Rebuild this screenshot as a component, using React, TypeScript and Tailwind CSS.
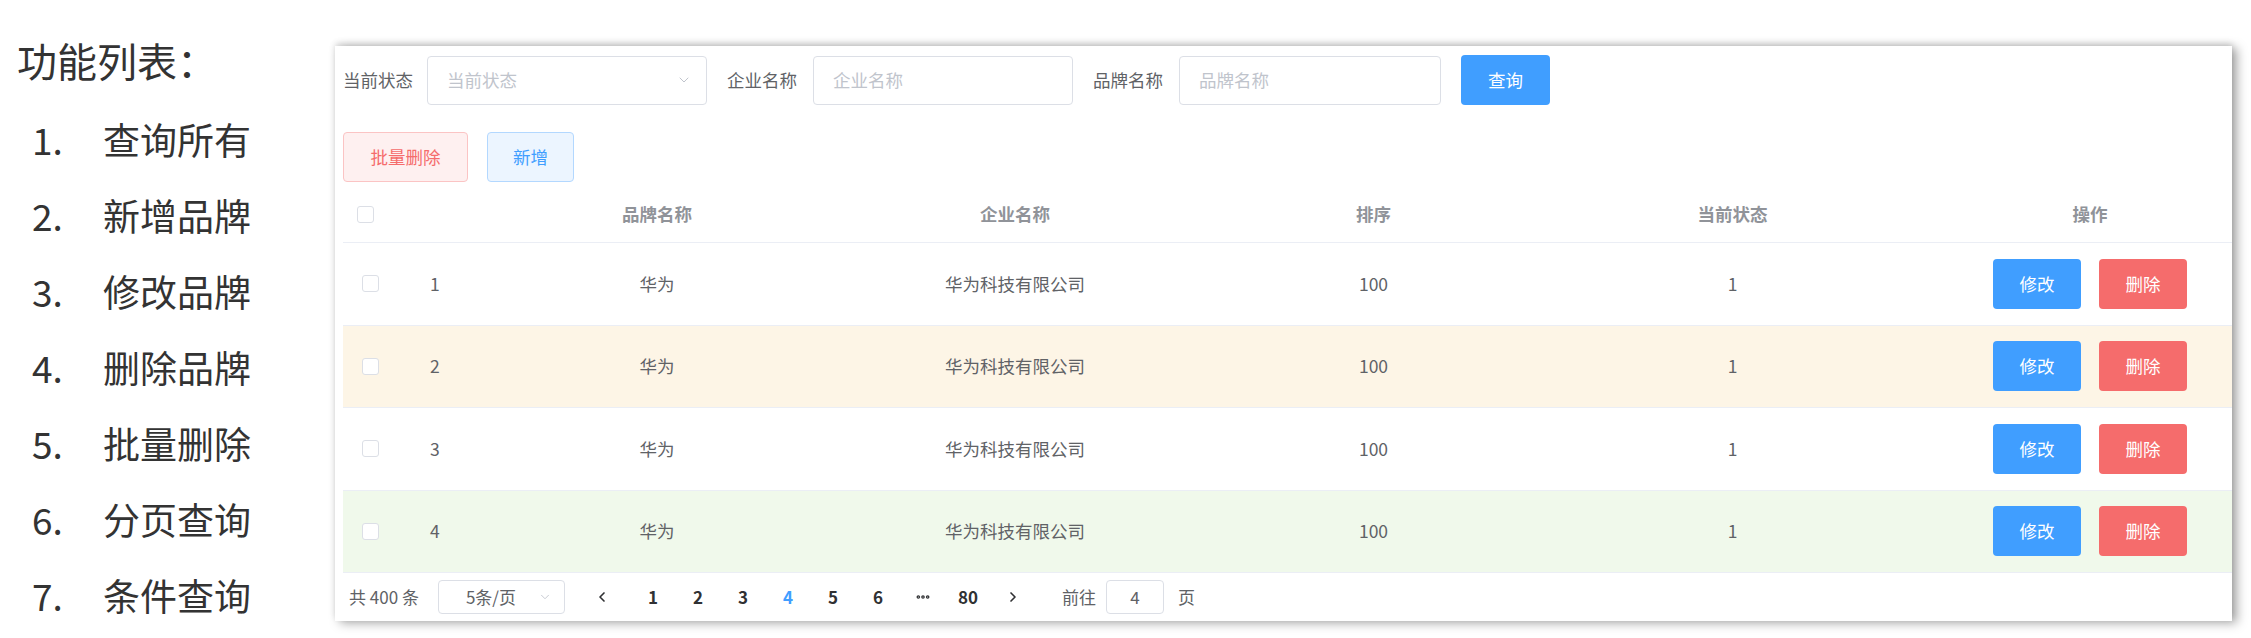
import { ChevronDown, ChevronLeft, ChevronRight, MoreHorizontal } from "lucide-react";

const features = [
  "查询所有",
  "新增品牌",
  "修改品牌",
  "删除品牌",
  "批量删除",
  "分页查询",
  "条件查询",
];

const rows = [
  { id: 1, bg: "bg-white" },
  { id: 2, bg: "bg-[#fdf5e6]" },
  { id: 3, bg: "bg-white" },
  { id: 4, bg: "bg-[#f0f9eb]" },
];

const pages = ["1", "2", "3", "4", "5", "6", "more", "80"];

const gridCols = "grid grid-cols-[72px_63px_358px_358px_359px_359px_356px]";

const Checkbox = () => (
  <span className="block w-[17px] h-[17px] rounded-[3px] border border-[#dcdfe6] bg-white" />
);

const App = () => {
  return (
    <div
      className="w-[2251px] h-[638px] bg-white flex"
      style={{ fontFamily: '"Noto Sans CJK SC", "Noto Sans", sans-serif' }}
    >
      {/* left: feature list */}
      <div className="w-[335px] shrink-0 pl-[17px] pt-[22px] text-[#333333]">
        <div className="h-[76px] flex items-center text-[40px] leading-none">功能列表：</div>
        <ol className="mt-[3px]">
          {features.map((f, i) => (
            <li key={f} className="h-[76px] flex items-center text-[37px] leading-none">
              <span className="w-[86px] pl-[15px]">{i + 1}.</span>
              <span>{f}</span>
            </li>
          ))}
        </ol>
      </div>

      {/* right: brand table panel */}
      <div className="mt-[46px] w-[1897px] h-[575px] bg-white overflow-hidden shadow-[5px_2px_10px_rgba(0,0,0,0.35),0_-3px_6px_rgba(0,0,0,0.12)] text-[17.5px] text-[#606266]">
        {/* search form */}
        <div className="flex items-center pl-[8px] pt-[9px] h-[59px]">
          <span className="w-[70px]">当前状态</span>
          <div className="ml-[14px] w-[280px] h-[49px] rounded-[4px] border border-[#dcdfe6] flex items-center justify-between pl-[19px] pr-[14px] text-[#c0c4cc]">
            <span>当前状态</span>
            <ChevronDown size={16} strokeWidth={1.5} className="text-[#c0c4cc]" />
          </div>
          <span className="ml-[20px] w-[72px]">企业名称</span>
          <div className="ml-[14px] w-[260px] h-[49px] rounded-[4px] border border-[#dcdfe6] flex items-center pl-[19px] text-[#c0c4cc]">
            企业名称
          </div>
          <span className="ml-[20px] w-[72px]">品牌名称</span>
          <div className="ml-[14px] w-[262px] h-[49px] rounded-[4px] border border-[#dcdfe6] flex items-center pl-[19px] text-[#c0c4cc]">
            品牌名称
          </div>
          <button className="ml-[20px] w-[89px] h-[50px] rounded-[4px] bg-[#409eff] text-white">查询</button>
        </div>

        {/* actions */}
        <div className="flex gap-[19px] pl-[8px] mt-[27px]">
          <button className="w-[125px] h-[50px] rounded-[4px] border border-[#fbc4c4] bg-[#fef0f0] text-[#f56c6c]">
            批量删除
          </button>
          <button className="w-[87px] h-[50px] rounded-[4px] border border-[#b3d8ff] bg-[#ecf5ff] text-[#409eff]">
            新增
          </button>
        </div>

        {/* table */}
        <div className="ml-[8px] mt-[4px]">
          <div className={`${gridCols} h-[57px] items-center border-b border-[#ebeef5] font-semibold text-[#909399]`}>
            <div className="pl-[14px]">
              <Checkbox />
            </div>
            <div />
            <div className="text-center">品牌名称</div>
            <div className="text-center">企业名称</div>
            <div className="text-center">排序</div>
            <div className="text-center">当前状态</div>
            <div className="text-center">操作</div>
          </div>
          {rows.map((r) => (
            <div
              key={r.id}
              className={`${gridCols} h-[82.5px] items-center border-b border-[#ebeef5] ${r.bg}`}
            >
              <div className="pl-[19px]">
                <Checkbox />
              </div>
              <div className="pl-[15px]">{r.id}</div>
              <div className="text-center">华为</div>
              <div className="text-center">华为科技有限公司</div>
              <div className="text-center">100</div>
              <div className="text-center">1</div>
              <div className="flex justify-center gap-[18px]">
                <button className="w-[88px] h-[50px] rounded-[4px] bg-[#409eff] text-white">修改</button>
                <button className="w-[88px] h-[50px] rounded-[4px] bg-[#f56c6c] text-white">删除</button>
              </div>
            </div>
          ))}
        </div>

        {/* pagination */}
        <div className="flex items-center h-[47px] pl-[14px] text-[17px]">
          <span>共 400 条</span>
          <div className="ml-[19px] w-[127px] h-[34px] rounded-[4px] border border-[#dcdfe6] flex items-center justify-between pl-[27px] pr-[12px]">
            <span>5条/页</span>
            <ChevronDown size={14} strokeWidth={1.5} className="text-[#c0c4cc]" />
          </div>
          <div className="ml-[14px] flex items-center font-bold text-[#303133]">
            <span className="w-[45.5px] mr-[6px] flex justify-center">
              <ChevronLeft size={16} strokeWidth={2.5} />
            </span>
            {pages.map((p) =>
              p === "more" ? (
                <span key={p} className="w-[45px] flex justify-center">
                  <MoreHorizontal size={16} strokeWidth={3.5} />
                </span>
              ) : (
                <span
                  key={p}
                  className={`w-[45px] text-center ${p === "4" ? "text-[#409eff]" : ""}`}
                >
                  {p}
                </span>
              )
            )}
            <span className="w-[45.5px] flex justify-center">
              <ChevronRight size={16} strokeWidth={2.5} />
            </span>
          </div>
          <span className="ml-[26px]">前往</span>
          <div className="ml-[10px] w-[58px] h-[34px] rounded-[4px] border border-[#dcdfe6] flex items-center justify-center">
            4
          </div>
          <span className="ml-[14px]">页</span>
        </div>
      </div>
    </div>
  );
};

export default App;
